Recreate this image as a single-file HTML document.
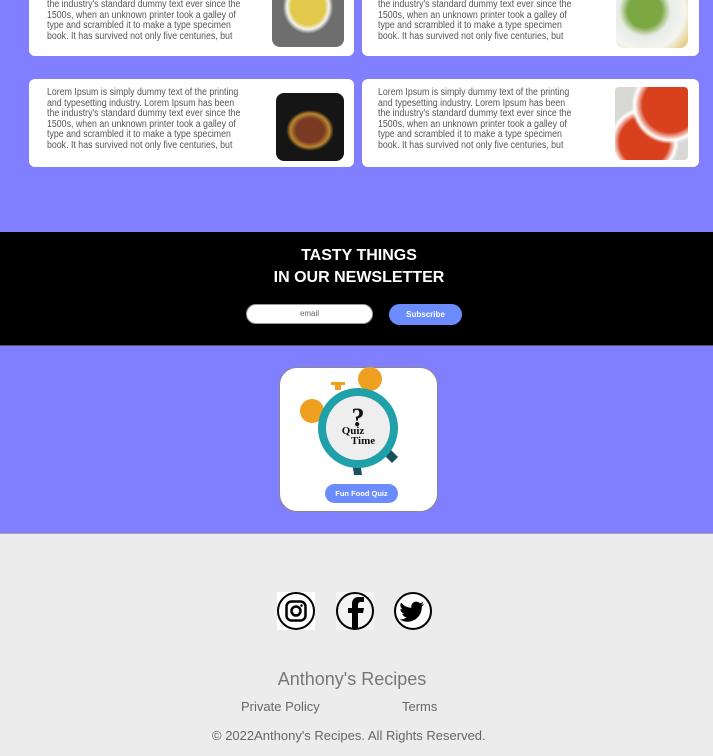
<!DOCTYPE html>
<html><head><meta charset="utf-8"><style>
*{margin:0;padding:0;box-sizing:border-box}
body{width:713px;height:756px;overflow:hidden;background:#ececec;font-family:"Liberation Sans",sans-serif;position:relative}
.abs{position:absolute}
.purple{background:#7f7fff}
.card{position:absolute;background:#fff;border-radius:6px}
.txt{position:absolute;font-size:10px;line-height:10.5px;color:#555;white-space:nowrap;transform:scaleX(0.88);transform-origin:0 0}
.img{position:absolute;border-radius:8px;overflow:hidden}
</style></head><body>
<div class="abs purple" style="left:0;top:0;width:713px;height:232px"></div>
<div class="card" style="left:29px;top:-20px;width:325px;height:76px"></div>
<div class="card" style="left:362px;top:-20px;width:337px;height:76px"></div>
<div class="card" style="left:29px;top:79px;width:325px;height:88px"></div>
<div class="card" style="left:362px;top:79px;width:337px;height:88px"></div>
<div class="txt" style="left:47px;top:0px">the industry's standard dummy text ever since the<br>1500s, when an unknown printer took a galley of<br>type and scrambled it to make a type specimen<br>book. It has survived not only five centuries, but</div>
<div class="txt" style="left:378px;top:0px">the industry's standard dummy text ever since the<br>1500s, when an unknown printer took a galley of<br>type and scrambled it to make a type specimen<br>book. It has survived not only five centuries, but</div>
<div class="txt" style="left:47px;top:88px">Lorem Ipsum is simply dummy text of the printing<br>and typesetting industry. Lorem Ipsum has been<br>the industry's standard dummy text ever since the<br>1500s, when an unknown printer took a galley of<br>type and scrambled it to make a type specimen<br>book. It has survived not only five centuries, but</div>
<div class="txt" style="left:378px;top:88px">Lorem Ipsum is simply dummy text of the printing<br>and typesetting industry. Lorem Ipsum has been<br>the industry's standard dummy text ever since the<br>1500s, when an unknown printer took a galley of<br>type and scrambled it to make a type specimen<br>book. It has survived not only five centuries, but</div>
<div class="img" style="left:272px;top:-20px;width:72px;height:67px;background:radial-gradient(ellipse 28px 30px at 50% 40%,#e3c94a 60%,#f2f2ee 75%,#6e6e6e 90%)"></div>
<div class="img" style="left:616px;top:-20px;width:72px;height:68px;background:radial-gradient(circle at 40% 45%,#7ca844 30%,#e8ece6 45%,#f4f4f0 70%,#e6d08a 90%)"></div>
<div class="img" style="left:276px;top:93px;width:68px;height:68px;background:radial-gradient(ellipse 28px 24px at 50% 55%,#7a3a24 50%,#b8862e 70%,#151515 85%)"></div>
<div class="img" style="left:615px;top:87px;width:73px;height:73px;border-radius:4px;background:radial-gradient(circle at 75% 25%,#d8401e 35%,#fff 45%,transparent 50%),radial-gradient(circle at 40% 75%,#d8401e 35%,#fff 45%,transparent 50%),#d8d8d4"></div>

<div class="abs" style="left:0;top:232px;width:713px;height:113px;background:#000"></div>
<div class="abs" style="left:0;top:245px;width:718px;text-align:center;color:#fff;font-weight:bold;font-size:16px;line-height:22px">TASTY THINGS<br>IN OUR NEWSLETTER</div>
<div class="abs" style="left:246px;top:304px;width:127px;height:20px;background:#fff;border-radius:10px;border:1px solid #999;text-align:center;font-size:8px;line-height:18px;color:#666">email</div>
<div class="abs" style="left:389px;top:304px;width:73px;height:21px;background:#6b8cff;border-radius:11px;text-align:center;font-size:8px;line-height:21px;color:#fff;font-weight:bold">Subscribe</div>
<div class="abs" style="left:0;top:345px;width:713px;height:1px;background:#555"></div>
<div class="abs purple" style="left:0;top:346px;width:713px;height:188px;border-bottom:1px solid #aaa"></div>
<div class="abs" style="left:279px;top:367px;width:159px;height:145px;background:#fff;border-radius:18px;border:1px solid #888"></div>
<svg class="abs" style="left:280px;top:365px" width="160" height="120" viewBox="0 0 160 120">
<circle cx="90" cy="14" r="12" fill="#f0a020"/>
<circle cx="32" cy="46" r="12" fill="#f0a020"/>
<rect x="55" y="17" width="6" height="8" fill="#f0a020"/>
<rect x="51" y="17" width="14" height="3" fill="#f0a020"/>
<path d="M72 96 l8 0 2 14 -8 0z M108 82 l10 10 -6 6 -10 -10z" fill="#1a5060"/>
<circle cx="78" cy="63" r="40" fill="#20a0a8"/>
<circle cx="78" cy="63" r="32" fill="#eee"/>
<text x="78" y="61" font-family="Liberation Serif,serif" font-weight="bold" font-size="26" text-anchor="middle" fill="#111">?</text>
<text x="73" y="69" font-family="Liberation Serif,serif" font-weight="bold" font-size="11" text-anchor="middle" fill="#111">Quiz</text>
<text x="83" y="79" font-family="Liberation Serif,serif" font-weight="bold" font-size="11" text-anchor="middle" fill="#111">Time</text>
</svg>
<div class="abs" style="left:325px;top:484px;width:73px;height:19px;background:#6b8cff;border-radius:10px;text-align:center;font-size:7.5px;line-height:19px;color:#fff;font-weight:bold">Fun Food Quiz</div>

<svg class="abs" style="left:277px;top:592px" width="156" height="39" viewBox="0 0 156 39">
<rect x="0" y="0" width="38" height="38" fill="#fff"/>
<circle cx="19" cy="19" r="18" fill="none" stroke="#000" stroke-width="2"/>
<rect x="9.5" y="9.5" width="19" height="19" rx="5" fill="none" stroke="#000" stroke-width="2.5"/>
<circle cx="19" cy="19" r="4.5" fill="none" stroke="#000" stroke-width="2.5"/>
<circle cx="24.5" cy="13.5" r="1.3" fill="#000"/>
<rect x="59" y="0" width="38" height="38" fill="#f4f4f4"/>
<circle cx="78" cy="19" r="18" fill="none" stroke="#000" stroke-width="2"/>
<path d="M81 36 V21 h5 l1 -5 h-6 v-3 c0 -2 1 -3 3 -3 h3 V5 h-5 c-5 0 -7 3 -7 7 v4 h-4 v5 h4 v15z" fill="#000"/>
<circle cx="136" cy="19" r="18" fill="#fff" stroke="#000" stroke-width="2"/>
<path d="M147 12 c-1 .5 -2 .7 -3 .8 1 -.6 2 -1.6 2.3 -2.8 -1 .6 -2 1 -3.3 1.3 a5 5 0 0 0 -8.6 4.5 c-4 -.2 -7.8 -2 -10.3 -5.2 -1.4 2.4 -.6 5.3 1.6 6.7 -.8 0 -1.6 -.3 -2.3 -.6 0 2.5 1.8 4.6 4 5 -.7 .2 -1.5 .3 -2.3 .1 .7 2 2.6 3.4 4.7 3.5 -2 1.6 -4.6 2.4 -7.3 2.1 9.7 6.2 22.6 -.4 22.3 -13 1 -.7 2 -1.6 2.6 -2.6z" fill="#000"/>
</svg>
<div class="abs" style="left:0;top:669px;width:704px;text-align:center;font-size:18px;color:#777">Anthony's Recipes</div>
<div class="abs" style="left:241px;top:699px;font-size:13px;color:#666">Private Policy</div>
<div class="abs" style="left:402px;top:699px;font-size:13px;color:#666">Terms</div>
<div class="abs" style="left:212px;top:728px;font-size:13px;color:#666">© 2022Anthony's Recipes. All Rights Reserved.</div>
</body></html>
